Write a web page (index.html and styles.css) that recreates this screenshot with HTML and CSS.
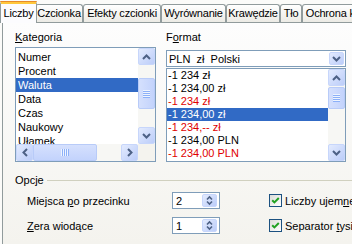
FILE: index.html
```html
<!DOCTYPE html>
<html lang="pl">
<head>
<meta charset="utf-8">
<title>Formatuj komórki</title>
<link rel="stylesheet" href="styles.css">
</head>
<body>
<div class="dlg">
  <div class="tabs">
    <div class="tab active t1">Liczby</div>
    <div class="tab t2">Czcionka</div>
    <div class="tab t3">Efekty czcionki</div>
    <div class="tab t4">Wyrównanie</div>
    <div class="tab t5">Krawędzie</div>
    <div class="tab t6">Tło</div>
    <div class="tab t7">Ochrona komórek</div>
  </div>
  <div class="panel">
    <div class="cols">
      <div class="col">
        <div class="lbl lbl-cat"><u>K</u>ategoria</div>
        <div class="listbox lb-cat">
          <div class="items items-cat">
            <div class="item">Numer</div>
            <div class="item">Procent</div>
            <div class="item sel">Waluta</div>
            <div class="item">Data</div>
            <div class="item">Czas</div>
            <div class="item">Naukowy</div>
            <div class="item">Ułamek</div>
          </div>
          <div class="vscroll">
            <div class="sbtn"><svg width="9" height="6" viewBox="0 0 9 6"><path d="M1 5L4.5 1.5L8 5" fill="none" stroke="#4d6185" stroke-width="2"/></svg></div>
            <div class="track"><div class="thumb thumb-cat"><div class="grip"></div></div></div>
            <div class="sbtn"><svg width="9" height="6" viewBox="0 0 9 6"><path d="M1 1L4.5 4.5L8 1" fill="none" stroke="#4d6185" stroke-width="2"/></svg></div>
          </div>
          <div class="hscroll">
            <div class="sbtn"><svg width="6" height="9" viewBox="0 0 6 9"><path d="M5 1L1.5 4.5L5 8" fill="none" stroke="#4d6185" stroke-width="2"/></svg></div>
            <div class="htrack"><div class="hthumb"><div class="hgrip"></div></div></div>
            <div class="sbtn"><svg width="6" height="9" viewBox="0 0 6 9"><path d="M1 1L4.5 4.5L1 8" fill="none" stroke="#4d6185" stroke-width="2"/></svg></div>
          </div>
          <div class="corner"></div>
        </div>
      </div>
      <div class="col">
        <div class="lbl lbl-fmt">F<u>o</u>rmat</div>
        <div class="combo">
          <span class="combo-text">PLN&nbsp; zł&nbsp; Polski</span>
          <div class="sbtn combo-btn"><svg width="9" height="6" viewBox="0 0 9 6"><path d="M1 1L4.5 4.5L8 1" fill="none" stroke="#4d6185" stroke-width="2"/></svg></div>
        </div>
        <div class="listbox lb-fmt">
          <div class="items items-fmt">
            <div class="item">-1 234 zł</div>
            <div class="item">-1 234,00 zł</div>
            <div class="item neg">-1 234 zł</div>
            <div class="item sel">-1 234,00 zł</div>
            <div class="item neg">-1 234,-- zł</div>
            <div class="item">-1 234,00 PLN</div>
            <div class="item neg">-1 234,00 PLN</div>
          </div>
          <div class="vscroll">
            <div class="sbtn"><svg width="9" height="6" viewBox="0 0 9 6"><path d="M1 5L4.5 1.5L8 5" fill="none" stroke="#4d6185" stroke-width="2"/></svg></div>
            <div class="track"><div class="thumb thumb-fmt"><div class="grip"></div></div></div>
            <div class="sbtn"><svg width="9" height="6" viewBox="0 0 9 6"><path d="M1 1L4.5 4.5L8 1" fill="none" stroke="#4d6185" stroke-width="2"/></svg></div>
          </div>
        </div>
      </div>
    </div>
    <div class="group">
      <div class="group-title"><span>Opcje</span><div class="rule"></div></div>
      <div class="opts">
        <div class="opt-lbl">Miejsca <u>p</u>o przecinku</div>
        <div class="spin"><span>2</span><div class="sbtn spin-btn"><svg width="7" height="11" viewBox="0 0 7 11"><path d="M1 4.5L3.5 2L6 4.5M1 6.5L3.5 9L6 6.5" fill="none" stroke="#4d6185" stroke-width="1.6"/></svg></div></div>
        <div></div>
        <div class="check"><span class="box"><svg width="11" height="11" viewBox="0 0 11 11"><path d="M2.2 5.2L4.4 7.4L8.8 3" fill="none" stroke="#21a121" stroke-width="2"/></svg></span><span class="check-text">Liczby ujem<u>n</u>e na czerwono</span></div>
        <div class="opt-lbl"><u>Z</u>era wiodące</div>
        <div class="spin"><span>1</span><div class="sbtn spin-btn"><svg width="7" height="11" viewBox="0 0 7 11"><path d="M1 4.5L3.5 2L6 4.5M1 6.5L3.5 9L6 6.5" fill="none" stroke="#4d6185" stroke-width="1.6"/></svg></div></div>
        <div></div>
        <div class="check"><span class="box"><svg width="11" height="11" viewBox="0 0 11 11"><path d="M2.2 5.2L4.4 7.4L8.8 3" fill="none" stroke="#21a121" stroke-width="2"/></svg></span><span class="check-text">Separator <u>t</u>ysięcy</span></div>
      </div>
    </div>
  </div>
</div>
</body>
</html>
```

FILE: styles.css
```css
* { box-sizing: border-box; }
html, body {
  margin: 0;
  width: 352px;
  height: 244px;
  overflow: hidden;
}
body {
  font: 11px "Liberation Sans", Arial, sans-serif;
  color: #000;
  background: #fbfbf9;
}
u { text-decoration: underline; text-underline-offset: 1px; }
.dlg { width: 440px; }

/* tabs */
.tabs {
  display: flex;
  align-items: flex-end;
  height: 22px;
  padding-left: 2px;
  position: relative;
  z-index: 1;
}
.tab {
  flex: none;
  height: 18px;
  border: 1px solid #919b9c;
  border-bottom: 0;
  border-radius: 3px 3px 0 0;
  background: linear-gradient(#ffffff, #ecebe5);
  text-align: center;
  line-height: 17px;
  white-space: nowrap;
  letter-spacing: -0.2px;
}
.tab.active {
  height: 22px;
  margin: 0 -2px -1px -2px;
  border-top: 3px solid #ffc83c;
  background: #fcfcfe;
  padding-top: 1px;
  position: relative;
  z-index: 2;
}
.tab.active::before {
  content: "";
  position: absolute;
  left: -1px; right: -1px; top: -3px;
  height: 1px;
  background: #e68b2c;
  border-radius: 3px 3px 0 0;
}
.t1 { width: 37px; }
.t2 { width: 48px; }
.t3 { width: 78px; }
.t4 { width: 65px; }
.t5 { width: 54px; }
.t6 { width: 22px; }
.t7 { width: 92px; }

/* panel */
.panel {
  margin-left: 2px;
  height: 222px;
  border-top: 1px solid #919b9c;
  border-left: 1px solid #919b9c;
  background: linear-gradient(#fdfdfd, #f4f3ee);
  padding: 8px 0 0 12px;
}
.cols {
  display: grid;
  grid-template-columns: 141px 180px;
  column-gap: 10px;
}
.lbl { height: 13px; line-height: 13px; }
.lbl-cat { margin-bottom: 3px; }
.lbl-fmt { margin-bottom: 6px; }

.listbox {
  border: 1px solid #7f9db9;
  background: #fff;
  display: grid;
}
.lb-cat {
  height: 115px;
  grid-template-columns: 1fr 17px;
  grid-template-rows: 1fr 17px;
}
.lb-fmt {
  height: 94px;
  grid-template-columns: 1fr 17px;
}
.items { overflow: hidden; min-width: 0; min-height: 0; }
.items-cat { padding-top: 2px; }
.items-cat .item { height: 14px; line-height: 14px; padding-left: 2px; }
.items-fmt .item { height: 13px; line-height: 13px; padding-left: 1px; }
.item { white-space: nowrap; }
.item.sel { background: #316ac5; color: #fff; }
.item.neg { color: #e00000; }

/* scrollbars */
.sbtn {
  flex: none;
  width: 17px;
  height: 17px;
  border: 1px solid #c7d6fb;
  border-radius: 2px;
  background: linear-gradient(135deg, #e3ebfe, #bccdf9);
  display: flex;
  align-items: center;
  justify-content: center;
}
.vscroll {
  display: flex;
  flex-direction: column;
  background: #f7f7f4;
}
.track { flex: 1; }
.thumb {
  width: 17px;
  border: 1px solid #b8cbf8;
  border-radius: 2px;
  background: linear-gradient(90deg, #d5e0fd, #c3d3fc);
  display: flex;
  align-items: center;
  justify-content: center;
}
.thumb-cat { margin-top: 13px; height: 31px; }
.thumb-fmt { margin-top: 1px; height: 22px; }
.grip {
  width: 7px;
  height: 8px;
  background: repeating-linear-gradient(#eef4fe 0 1px, #8cb0f8 1px 2px);
}
.hscroll {
  display: flex;
  background: #f7f7f4;
}
.htrack { flex: 1; }
.hthumb {
  width: 64px;
  height: 17px;
  border: 1px solid #b8cbf8;
  border-radius: 2px;
  background: linear-gradient(#d5e0fd, #c3d3fc);
  display: flex;
  align-items: center;
  justify-content: center;
}
.hgrip {
  width: 8px;
  height: 7px;
  background: repeating-linear-gradient(90deg, #eef4fe 0 1px, #8cb0f8 1px 2px);
}
.corner { background: #f4f3ee; }

/* combo */
.combo {
  height: 17px;
  margin-bottom: 1px;
  border: 1px solid #7f9db9;
  background: #fff;
  display: flex;
  align-items: center;
  justify-content: space-between;
  padding-left: 2px;
}
.combo-text { white-space: pre; }
.combo-btn { width: 15px; height: 13px; margin-right: 1px; }

/* options group */
.group { margin-top: 12px; }
.group-title {
  display: flex;
  align-items: center;
  gap: 3px;
  height: 13px;
  line-height: 13px;
}
.rule { flex: 1; height: 1px; background: #d0d0bf; }
.opts {
  display: grid;
  grid-template-columns: 145px 48px 49px auto;
  grid-auto-rows: 17px;
  row-gap: 8px;
  align-items: center;
  margin-top: 5px;
  padding-left: 12px;
}
.opt-lbl { white-space: nowrap; }
.spin {
  height: 17px;
  border: 1px solid #7f9db9;
  background: #fff;
  display: flex;
  align-items: center;
  justify-content: space-between;
  padding-left: 3px;
}
.spin-btn { width: 15px; height: 13px; margin-right: 2px; }
.check {
  display: flex;
  align-items: center;
  gap: 3px;
  white-space: nowrap;
}
.check-text { white-space: nowrap; }
.box {
  flex: none;
  width: 13px;
  height: 13px;
  border: 1px solid #1c5180;
  background: linear-gradient(135deg, #dcdcd7, #ffffff);
  display: flex;
  align-items: center;
  justify-content: center;
}
```
